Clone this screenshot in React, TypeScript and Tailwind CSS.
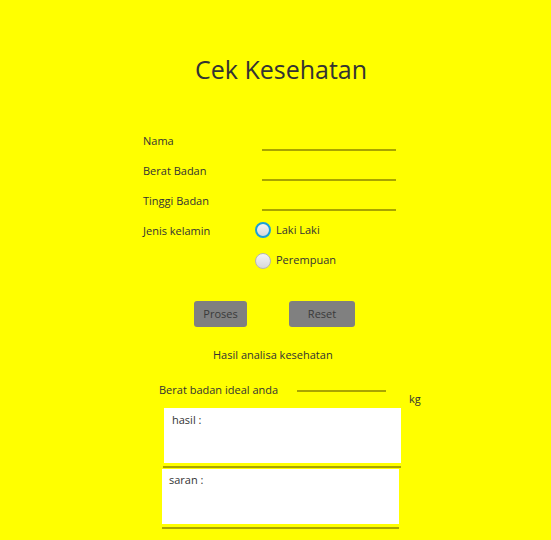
import React from "react";

const font = { fontFamily: '"Open Sans", "Noto Sans", sans-serif' };

function Field() {
  return <div className="w-[134px] h-[20px] border-b-2 border-[#aaa500]" />;
}

function Radio({ focused }: { focused?: boolean }) {
  return (
    <div
      className={
        "w-[16px] h-[16px] rounded-full bg-gradient-to-b from-[#f4f4f4] to-[#d8d8d8] " +
        (focused ? "border-2 border-[#1aa0d8]" : "border border-[#b5b5b5]")
      }
    />
  );
}

export default function App() {
  return (
    <div
      className="w-[551px] h-[540px] bg-[#ffff00] overflow-hidden text-[#333333] text-[11px] flex flex-col"
      style={font}
    >
      <div className="pt-[50px] pl-[195px] text-[25px] leading-[38px] h-[126px]">Cek Kesehatan</div>
      <div className="flex flex-col pl-[143px]">
        {["Nama", "Berat Badan", "Tinggi Badan"].map((l) => (
          <div key={l} className="flex items-center h-[30px]">
            <div className="w-[119px]">{l}</div>
            <Field />
          </div>
        ))}
        <div className="flex items-center h-[30px]">
          <div className="w-[112px]">Jenis kelamin</div>
          <div className="flex items-center gap-[5px] -mt-[2px]">
            <Radio focused />
            <span>Laki Laki</span>
          </div>
        </div>
        <div className="flex items-center h-[30px]">
          <div className="w-[112px]" />
          <div className="flex items-center gap-[5px] -mt-[1px]">
            <Radio />
            <span>Perempuan</span>
          </div>
        </div>
      </div>
      <div className="flex pl-[194px] gap-[42px] mt-[25px]">
        <button className="w-[53px] h-[26px] rounded-[3px] bg-[#808080] text-[#3a3a3a]">Proses</button>
        <button className="w-[66px] h-[26px] rounded-[3px] bg-[#808080] text-[#3a3a3a]">Reset</button>
      </div>
      <div className="pl-[213px] mt-[18px] h-[20px] leading-[20px]">Hasil analisa kesehatan</div>
      <div className="flex pl-[159px] mt-[15px] h-[20px] items-start">
        <div className="w-[138px] leading-[20px]">Berat badan ideal anda</div>
        <div className="w-[89px] h-[12px] border-b-2 border-[#aaa500]" />
        <div className="ml-[23px] mt-[9px] leading-[20px]">kg</div>
      </div>
      <div className="pl-[163px] mt-[8px] flex flex-col">
        <div className="w-[238px] border-b-2 border-[#aaa500] pb-[3px]">
          <div className="ml-[1px] w-[237px] h-[55px] bg-white px-[8px] pt-[4px]">hasil :</div>
        </div>
        <div className="-ml-[1px] mt-[1px] w-[237px] border-b-2 border-[#aaa500] pb-[3px]">
          <div className="w-[237px] h-[55px] bg-white px-[7px] pt-[3px]">saran :</div>
        </div>
      </div>
    </div>
  );
}
